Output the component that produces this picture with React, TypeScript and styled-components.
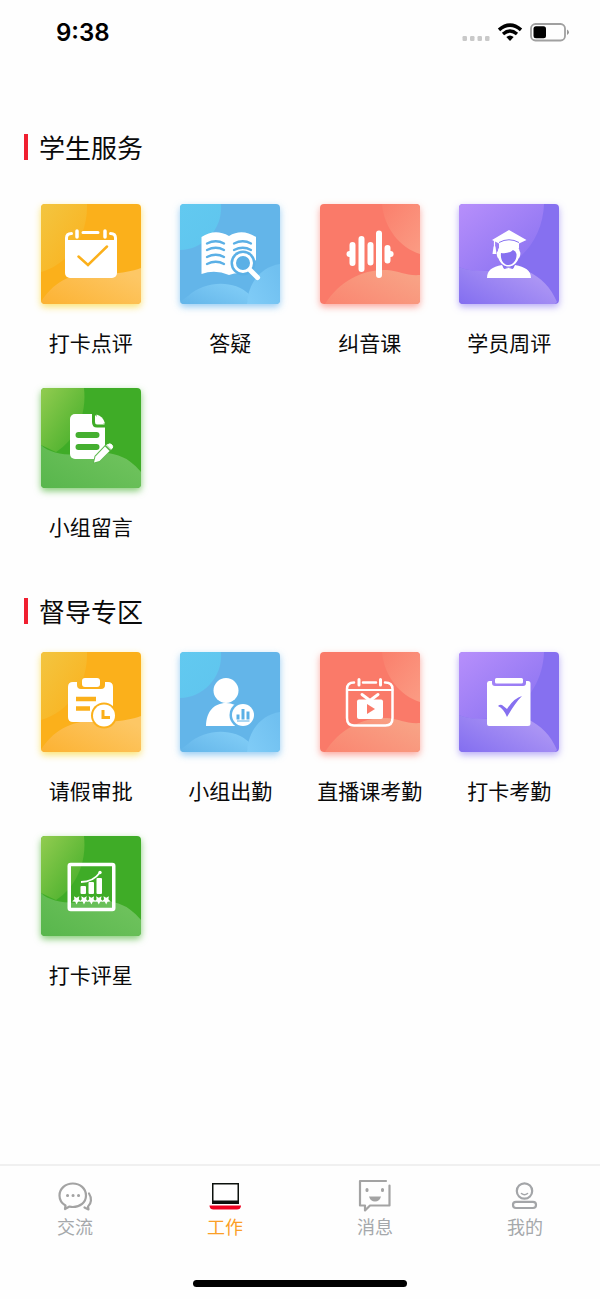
import React from "react";
import styled, { createGlobalStyle } from "styled-components";

const GlobalStyle = createGlobalStyle`
  * { box-sizing: border-box; }
  body {
    margin: 0;
    background: #fefefe;
    color: #0a0a0a;
    font-family: "Noto Sans CJK SC", sans-serif;
  }
  button { font: inherit; color: inherit; border: 0; background: none; padding: 0; cursor: pointer; }
`;

const Page = styled.div`
  min-height: 100vh;
  display: flex;
  flex-direction: column;
`;

const StatusBar = styled.header`
  height: 66px;
  padding: 0 31px 0 56px;
  display: flex;
  align-items: center;
  justify-content: space-between;
`;

const Clock = styled.time`
  font: 600 24px/32px Inter, sans-serif;
  color: #000;
`;

const StatusIcons = styled.svg`
  display: block;
  width: 107px;
  height: 22px;
`;

const Main = styled.main`
  flex: 1;
  padding: 61px 21px 40px;
  display: flex;
  flex-direction: column;
  gap: 49px;
`;

const Section = styled.section<{ $gap: number }>`
  display: flex;
  flex-direction: column;
  gap: ${(p) => p.$gap}px;
`;

const SectionTitle = styled.h2`
  margin: 0 0 0 3px;
  display: flex;
  align-items: center;
  gap: 11px;
  font-size: 26px;
  line-height: 40px;
  font-weight: 400;

  &::before {
    content: "";
    width: 4px;
    height: 26px;
    background: #f01f30;
  }
`;

const Grid = styled.div`
  display: grid;
  grid-template-columns: repeat(4, 1fr);
  row-gap: 30px;
`;

const Entry = styled.button`
  display: flex;
  flex-direction: column;
  align-items: center;
  gap: 22px;
  font-size: 21px;
  line-height: 32px;
  white-space: nowrap;
`;

const Tile = styled.span<{ $shadow: string }>`
  display: block;
  width: 100px;
  height: 100px;
  border-radius: 4px;
  box-shadow: 0 3px 7px ${(p) => p.$shadow};

  svg { display: block; border-radius: 4px; }
`;

const Footer = styled.footer`
  border-top: 2px solid #f0f0f0;
  padding: 12px 0;
  display: flex;
  flex-direction: column;
  align-items: center;
  gap: 41px;
`;

const Tabs = styled.nav`
  width: 100%;
  display: grid;
  grid-template-columns: repeat(4, 1fr);
`;

const Tab = styled.button<{ $active?: boolean }>`
  display: flex;
  flex-direction: column;
  align-items: center;
  gap: 1px;
  font-size: 18px;
  line-height: 26px;
  && { color: ${(p) => (p.$active ? "#fb9f26" : "#a5a8ab")}; }

  svg { display: block; }
`;

const HomeIndicator = styled.div`
  width: 214px;
  height: 7px;
  border-radius: 4px;
  background: #000;
`;

type Tone = "amber" | "blue" | "coral" | "violet" | "green";

interface Blob {
  d: string;
  from: string;
  to: string;
  rising?: boolean;
}

const tones: Record<Tone, { base: string; shadow: string; blobs: Blob[] }> = {
  amber: {
    base: "#fbb01b",
    shadow: "rgba(250, 214, 40, 0.65)",
    blobs: [
      { d: "M0 0H46C47 32 28 60 0 68Z", from: "#f3c540", to: "#fbb01b" },
      { d: "M0 98C12 78 32 67 60 69C78 70 89 68 100 64V100H0Z", from: "#fcb232", to: "#fdc765", rising: true },
    ],
  },
  blue: {
    base: "#63b5e9",
    shadow: "rgba(84, 172, 236, 0.6)",
    blobs: [
      { d: "M0 0H41C43 26 22 46 0 46Z", from: "#62c9f0", to: "#5fc5ee" },
      { d: "M8 92C26 76 54 76 69 90L67 100H0V98Z", from: "#63b5e9", to: "#80ccf6", rising: true },
      { d: "M67 100C68 80 80 63 100 60V100Z", from: "#80ccf7", to: "#70c0f0", rising: true },
    ],
  },
  coral: {
    base: "#fa7a69",
    shadow: "rgba(250, 112, 96, 0.6)",
    blobs: [
      { d: "M62 0C64 24 80 44 100 50V0Z", from: "#fa7f6c", to: "#fb9c84" },
      { d: "M5 100C20 76 44 65 67 66C80 67 86 72 100 71V100Z", from: "#fa8570", to: "#f8a285", rising: true },
    ],
  },
  violet: {
    base: "#8670f0",
    shadow: "rgba(130, 108, 240, 0.55)",
    blobs: [
      { d: "M0 0H85C84 34 60 68 21 67C12 67 5 65 0 63Z", from: "#b78ffb", to: "#8670f0" },
      { d: "M0 63C8 67 20 67 30 67C42 62 58 63 68 67C82 73 92 84 98 98L96 100H0Z", from: "#836ef0", to: "#b29bf5", rising: true },
    ],
  },
  green: {
    base: "#3fac27",
    shadow: "rgba(68, 176, 44, 0.65)",
    blobs: [
      { d: "M0 0H43C46 28 34 52 15 64L0 57Z", from: "#92cc50", to: "#3fac27" },
      { d: "M0 57C9 66 28 68 45 66C62 62 82 66 92 76C96 79 98 82 100 84V100H0Z", from: "#58b64c", to: "#70c35e", rising: true },
    ],
  },
};

function Backdrop({ tone }: { tone: Tone }) {
  const { base, blobs } = tones[tone];
  return (
    <>
      <defs>
        {blobs.map((b, i) => (
          <linearGradient key={i} id={`${tone}-${i}`} x1="0" y1={b.rising ? "1" : "0"} x2="1" y2={b.rising ? "0.3" : "1"}>
            <stop offset="0" stopColor={b.from} />
            <stop offset="1" stopColor={b.to} />
          </linearGradient>
        ))}
      </defs>
      <rect width="100" height="100" fill={base} />
      {blobs.map((b, i) => (
        <path key={i} d={b.d} fill={`url(#${tone}-${i})`} />
      ))}
    </>
  );
}

const CalendarCheck = (
  <g fill="none" stroke="#fff" strokeLinecap="round" strokeWidth="3">
    <path d="M24 36H76V69a5 5 0 0 1-5 5H29a5 5 0 0 1-5-5Z" fill="#fff" stroke="none" />
    <path d="M25.500 37V34Q25.500 29.500 30.500 29.500M74.500 37V34Q74.500 29.500 69.500 29.500M42 28.500H57" />
    <path d="M36 27V33M64 27V33" strokeWidth="3.500" />
    <path d="M37.500 52.500L47 61L66 42.500" stroke="#fbb01b" strokeWidth="2.500" />
  </g>
);

const BookSearch = (
  <g fill="none" strokeLinecap="round">
    <path d="M21.500 33Q35 24 49 32Q62 24 76 33V56L60 69Q54 69 49 71Q35 65 21.500 70Z" fill="#fff" />
    <g stroke="#5bb0e6" strokeWidth="2.300">
      <path d="M27 39.500Q36 35 44 39.500M27 46Q36 41.500 44 46M27 53Q36 48.500 44 53M27 60Q36 55.500 44 60" />
      <path d="M54 39.500Q63 35 71 39.500M54 46Q63 41.500 71 46" />
    </g>
    <circle cx="63" cy="59" r="12.500" fill="#5bb0e6" />
    <circle cx="63" cy="59" r="8.500" stroke="#fff" strokeWidth="3" />
    <path d="M70 66L77.500 73.500" stroke="#fff" strokeWidth="5" />
  </g>
);

const Waveform = (
  <g stroke="#fff" strokeLinecap="round" strokeWidth="6">
    <path d="M32.500 41V59M41.500 35V65M50.500 41V58.500M59 29.500V71M67.500 44V56.500" />
    <path d="M29.500 50H29.600M70.500 50H70.600" />
  </g>
);

const Graduate = (
  <g fill="#fff">
    <path d="M39 47C38 39 61 39 60.500 47C62 48 61.500 53 59.500 54.500C57.500 60 53.500 62.500 49.500 62.500S41.500 60 39.500 54.500C37.500 53 37 48 39 47Z" />
    <path d="M42 49Q50 50 54 46Q57 47 57.500 50C58 56 54 61 49.500 61S41 56 42 49Z" fill="#8670f0" />
    <path d="M33 36L50 26L67.500 36L60 39.500V44.500Q50 41 40 44.500V39.500Z" />
    <path d="M40 38.500Q50 33 60 38.500" fill="none" stroke="#8670f0" strokeWidth="1" />
    <path d="M35.500 37V43" stroke="#fff" strokeWidth="1.200" />
    <path d="M34.500 42.500H36.500L37.500 50H33.500Z" />
    <path d="M28 74C28 66 33 63 43 61L45 65L49.500 63L54 65L56 61C66 63 72 66 72 74Z" />
    <path d="M44 61.500L45.500 64.500L49.500 63.500L53.500 64.500L55 61.500" fill="none" stroke="#8670f0" strokeWidth="0.800" />
  </g>
);

const NoteEdit = (
  <g fill="none" strokeLinecap="round">
    <path d="M34 26H53L64 37V59L53 71H34a5 5 0 0 1-5-5V31a5 5 0 0 1 5-5Z" fill="#fff" />
    <path d="M52.500 24V34Q52.500 38 56 38H66" stroke="#3fac27" strokeWidth="3" strokeLinecap="butt" />
    <path d="M55.500 26.500Q62 28 64 35.500H56.500Q55.500 35.500 55.500 34.500Z" fill="#fff" />
    <path d="M37.500 47H55.500M37.500 59H55.500" stroke="#45af30" strokeWidth="6" />
    <path d="M52 75.500L53.500 68L65 56L71 61L58.500 74Z" fill="#5db84d" />
    <path d="M53 74.500L54.500 68.500L64 58.500L68.500 63L58.500 73Z" fill="#fff" />
    <path d="M66 57L67 56.500Q69 55 71 57Q72.500 59 71 60.500L70 61Z" fill="#fff" stroke="#fff" strokeWidth="1" />
  </g>
);

const LeaveClock = (
  <g>
    <path d="M32 30H36V33Q36 37 40 37H60Q64 37 64 33V30H67Q72 30 72 35V70H32Q27 70 27 65V35Q27 30 32 30Z" fill="#fff" />
    <rect x="41" y="26" width="18" height="9" rx="3" fill="#fff" />
    <path d="M35 47H55M35 56.500H49" stroke="#fbb01b" strokeWidth="4.500" />
    <circle cx="63" cy="63.500" r="13" fill="#fbb01b" />
    <circle cx="63" cy="63.500" r="11" fill="#fff" />
    <path d="M62 58V65.500H69" fill="none" stroke="#fbb01b" strokeWidth="3" />
  </g>
);

const PersonStats = (
  <g>
    <circle cx="46" cy="38.500" r="12.500" fill="#fff" />
    <path d="M26 74C26 60 34 51 46 51Q51 51 55 53V74Z" fill="#fff" />
    <circle cx="63" cy="63" r="13.500" fill="#63b5e9" />
    <circle cx="63" cy="63" r="11" fill="#fff" />
    <path d="M58 62.500V67.500M63 57V67.500M68 59.500V67.500" stroke="#5bb0e6" strokeWidth="3" />
    <path d="M57 69H69.500" stroke="#5bb0e6" strokeWidth="1" />
  </g>
);

const LiveCalendar = (
  <g fill="none" stroke="#fff" strokeLinecap="round" strokeWidth="2.500">
    <path d="M34 30.500Q27 30.500 27 37V66Q27 73.500 34 73.500H65.500Q72.500 73.500 72.500 66V37Q72.500 30.500 65 30.500M43 30.500H56" />
    <path d="M27 38H72.500" strokeWidth="2" />
    <path d="M39 27.500V33M60.500 27.500V33" strokeWidth="3" />
    <path d="M42 42.500L50 48.500L58 42.500" strokeWidth="3" />
    <rect x="37" y="47.500" width="26" height="19.500" rx="2" fill="#fff" stroke="none" />
    <path d="M47 52V62L55 57Z" fill="#fa7a69" stroke="none" />
  </g>
);

const BoardCheck = (
  <g fill="#fff">
    <path d="M30 29H33V31Q33 34 36 34H64Q67 34 67 31V29H69Q71.500 29 71.500 31.500V72Q71.500 74 69 74H30Q28 74 28 72V31.500Q28 29 30 29Z" />
    <rect x="36" y="26" width="28" height="5.500" rx="1.500" />
    <path d="M39 54Q41 52 43 53L48 57Q55 46 63 44Q56 51 48 65Q45 57 39 54Z" fill="#8670f0" />
  </g>
);

const starAt = (cx: number) =>
  Array.from({ length: 10 }, (_, i) => {
    const r = i % 2 ? 2.3 : 4.6;
    const a = (i * Math.PI) / 5 + Math.PI / 2;
    return `${(cx + r * Math.cos(a)).toFixed(2)},${(64 + r * Math.sin(a)).toFixed(2)}`;
  }).join(" ");

const StarChart = (
  <g>
    <rect x="28.250" y="28.500" width="44.500" height="45" rx="1.500" fill="none" stroke="#fff" strokeWidth="3.500" />
    <g fill="#fff">
      <rect x="39.500" y="50" width="5.500" height="8" rx="1" />
      <rect x="47.500" y="46" width="5.500" height="12" rx="1" />
      <rect x="55.500" y="42" width="5.500" height="16" rx="1" />
      {[35.6, 43, 50.4, 57.8, 65.2].map((x) => (
        <polygon key={x} points={starAt(x)} />
      ))}
      <circle cx="59" cy="36.500" r="1.700" />
    </g>
    <path d="M40 46Q52 46 59 36.500" fill="none" stroke="#fff" strokeWidth="1.800" />
  </g>
);

interface EntryData {
  label: string;
  tone: Tone;
  art: React.ReactNode;
}

const sections: { title: string; gap: number; entries: EntryData[] }[] = [
  {
    title: "学生服务",
    gap: 37,
    entries: [
      { label: "打卡点评", tone: "amber", art: CalendarCheck },
      { label: "答疑", tone: "blue", art: BookSearch },
      { label: "纠音课", tone: "coral", art: Waveform },
      { label: "学员周评", tone: "violet", art: Graduate },
      { label: "小组留言", tone: "green", art: NoteEdit },
    ],
  },
  {
    title: "督导专区",
    gap: 21,
    entries: [
      { label: "请假审批", tone: "amber", art: LeaveClock },
      { label: "小组出勤", tone: "blue", art: PersonStats },
      { label: "直播课考勤", tone: "coral", art: LiveCalendar },
      { label: "打卡考勤", tone: "violet", art: BoardCheck },
      { label: "打卡评星", tone: "green", art: StarChart },
    ],
  },
];

const ChatIcon = (
  <g fill="none" stroke="#a3a3a3" strokeWidth="2.200" strokeLinecap="round" strokeLinejoin="round">
    <path d="M8.500 27.500C5 25.500 2.500 21.500 2.500 17.500C2.500 10.500 8.500 5.500 15.800 5.500S29 10.500 29 17.500S23 29 15.800 29Q14 29 12.500 28.500L8 31Z" />
    <path d="M32 15.500C35 20 34.500 25.500 31 28.500L31.500 31.500L27.500 29.500" />
    <path d="M10.500 17.500H10.600M16 17.500H16.100M21.500 17.500H21.600" strokeWidth="3" />
  </g>
);

const LaptopIcon = (
  <g>
    <path d="M5 5H32V26H5Z" fill="#0c110d" />
    <path d="M6.500 6.500H30.500V22.500H6.500Z" fill="#fff" />
    <path d="M2.500 27.500H34V28Q33.500 31.500 30 31.500H6.500Q3 31.500 2.500 28Z" fill="#ee0220" />
  </g>
);

const MessageIcon = (
  <g fill="none" stroke="#a3a3a3" strokeWidth="2.200" strokeLinecap="round" strokeLinejoin="round">
    <path d="M29 3H3V27.500H8V32.500L13 27.500H32.500V7.500" />
    <path d="M10 11.500V12.500M25.500 11.500V12.500" strokeWidth="3" />
    <path d="M12 18.500H24Q22.500 23.500 18 23.500T12 18.500Z" fill="#a3a3a3" stroke="none" />
  </g>
);

const ProfileIcon = (
  <g fill="none" stroke="#a3a5a8" strokeWidth="2.200" strokeLinecap="round">
    <ellipse cx="17.500" cy="13" rx="7.700" ry="7.700" />
    <path d="M14.500 15.500Q17.500 18 20.500 15.500" strokeWidth="1.600" />
    <rect x="6" y="23.800" width="23" height="6.200" rx="3" />
  </g>
);

const tabs = [
  { label: "交流", icon: ChatIcon },
  { label: "工作", icon: LaptopIcon, active: true },
  { label: "消息", icon: MessageIcon },
  { label: "我的", icon: ProfileIcon },
];

export default function App() {
  return (
    <Page>
      <GlobalStyle />
      <StatusBar>
        <Clock>9:38</Clock>
        <StatusIcons viewBox="0 0 107 22" aria-hidden="true">
          <g fill="#c9c9c9">
            {[0.5, 8, 15.5, 23].map((x) => (
              <rect key={x} x={x} y="14" width="4.500" height="5" rx="1.200" />
            ))}
          </g>
          <g fill="none" stroke="#000" strokeWidth="3.600">
            <path d="M37 7.800Q48 -1.500 59 7.800" />
            <path d="M41 12Q48 6 55 12" strokeWidth="3.300" />
          </g>
          <path d="M44.300 15Q48 12 51.700 15L48 19Z" fill="#000" />
          <rect x="69" y="2" width="34" height="16.500" rx="4.500" fill="none" stroke="#a0a0a0" strokeWidth="1.800" />
          <rect x="71.500" y="4.300" width="12.500" height="12" rx="2.500" fill="#000" />
          <path d="M105 7.500Q107 8.500 107 10.200T105 13Z" fill="#999" />
        </StatusIcons>
      </StatusBar>

      <Main>
        {sections.map((section) => (
          <Section key={section.title} $gap={section.gap}>
            <SectionTitle>{section.title}</SectionTitle>
            <Grid>
              {section.entries.map((entry) => (
                <Entry key={entry.label} type="button">
                  <Tile $shadow={tones[entry.tone].shadow}>
                    <svg width="100" height="100" viewBox="0 0 100 100" aria-hidden="true">
                      <Backdrop tone={entry.tone} />
                      {entry.art}
                    </svg>
                  </Tile>
                  {entry.label}
                </Entry>
              ))}
            </Grid>
          </Section>
        ))}
      </Main>

      <Footer>
        <Tabs>
          {tabs.map((tab) => (
            <Tab key={tab.label} type="button" $active={tab.active}>
              <svg width="36" height="34" viewBox="0 0 36 34" aria-hidden="true">
                {tab.icon}
              </svg>
              {tab.label}
            </Tab>
          ))}
        </Tabs>
        <HomeIndicator />
      </Footer>
    </Page>
  );
}
